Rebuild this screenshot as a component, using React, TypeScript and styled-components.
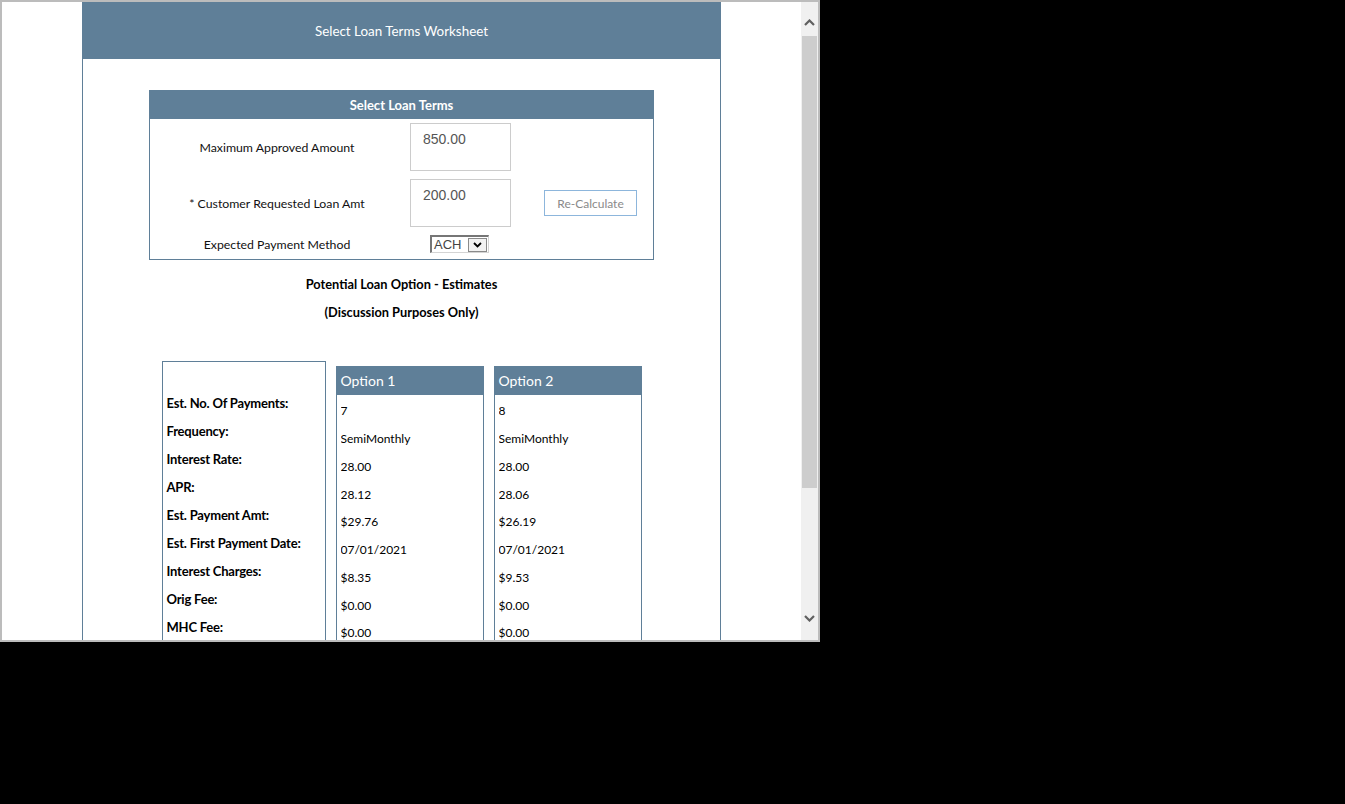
import React from "react";
import styled, { createGlobalStyle } from "styled-components";

const C = "#5f7f98";
const FONT = `Lato, "Open Sans", "Liberation Sans", sans-serif`;

const Global = createGlobalStyle`
  html, body { margin: 0; padding: 0; background: #000; }
  * { box-sizing: border-box; }
`;

const Frame = styled.div`
  width: 820px;
  height: 642px;
  border: 2px solid #bcbcbc;
  background: #fff;
  display: flex;
  overflow: hidden;
`;

const Viewport = styled.div`
  flex: 1;
  overflow: hidden;
  font-family: ${FONT};
`;

const ScrollBar = styled.div`
  width: 17px;
  background: #f0f0f0;
  display: flex;
  flex-direction: column;
  align-items: center;
`;

const ArrowBtn = styled.div<{ $pad: number }>`
  height: 34px;
  width: 100%;
  display: flex;
  align-items: flex-start;
  justify-content: center;
  padding-top: ${(p) => p.$pad}px;
`;

const Thumb = styled.div`
  width: 15px;
  height: 452px;
  background: #cdcdcd;
`;

const Spacer = styled.div`
  flex: 1;
`;

const Page = styled.div`
  width: 639px;
  margin: 0 auto;
  border-left: 1px solid ${C};
  border-right: 1px solid ${C};
  min-height: 700px;
`;

const TitleBar = styled.div`
  height: 57px;
  background: ${C};
  color: #fff;
  display: flex;
  align-items: center;
  justify-content: center;
  font-size: 13.4px;
`;

const Body = styled.div`
  padding-top: 31px;
  display: flex;
  flex-direction: column;
  align-items: center;
`;

const Panel = styled.div`
  width: 505px;
  border: 1px solid ${C};
`;

const PanelHead = styled.div`
  height: 28px;
  background: ${C};
  color: #fff;
  font-weight: 700;
  font-size: 13px;
  display: flex;
  align-items: center;
  justify-content: center;
`;

const PanelGrid = styled.div`
  display: grid;
  grid-template-columns: 254px 101px 93px;
  column-gap: 6px;
  row-gap: 8px;
  padding: 4px 0 6px;
  align-items: center;
`;

const FieldLabel = styled.div`
  text-align: center;
  font-size: 12.3px;
  color: #111;
`;

const AmountBox = styled.input`
  width: 101px;
  height: 48px;
  border: 1px solid #cccccc;
  padding: 0 0 17px 12px;
  font-family: Arial, "Liberation Sans", sans-serif;
  font-size: 14px;
  color: #555;
  background: #fff;
  outline: none;
`;

const RecalcBtn = styled.button`
  margin-left: 27px;
  width: 93px;
  height: 26px;
  border: 1px solid #8db6dc;
  background: #fff;
  color: #8a8a8a;
  font-family: ${FONT};
  font-size: 12px;
  padding: 0;
`;

const SelectBox = styled.div`
  justify-self: start;
  margin-left: 20px;
  width: 59px;
  height: 18px;
  border-style: solid;
  border-width: 2px 1px 1px 2px;
  border-color: #767676 #d4d4d4 #d4d4d4 #767676;
  display: flex;
  align-items: center;
  justify-content: space-between;
  padding-left: 2px;
  font-family: Arial, "Liberation Sans", sans-serif;
  font-size: 13px;
  color: #444;
`;

const SelectArrow = styled.span`
  width: 19px;
  height: 14px;
  border: 1px solid #8a8a8a;
  background: #f2f2f2;
  display: flex;
  align-items: center;
  justify-content: center;
  margin-right: 1px;
`;

const Heading = styled.div<{ $gap: number }>`
  margin-top: ${(p) => p.$gap}px;
  font-weight: 700;
  font-size: 12.8px;
  color: #000;
  line-height: 16px;
`;

const Options = styled.div`
  margin-top: 41px;
  display: flex;
  gap: 10px;
  align-items: flex-start;
`;

const LabelCol = styled.div`
  width: 164px;
  height: 320px;
  border: 1px solid ${C};
  padding: 27px 0 0 4px;
`;

const Row = styled.div`
  height: 28px;
  display: flex;
  align-items: center;
  white-space: nowrap;
`;

const LabelRow = styled(Row)`
  font-weight: 700;
  font-size: 13px;
  color: #000;
  letter-spacing: -0.2px;
`;

const OptionCol = styled.div`
  margin-top: 5px;
  width: 148px;
  height: 320px;
  border: 1px solid ${C};
  border-top: none;
`;

const OptionHead = styled.div`
  height: 29px;
  margin: 0 -1px;
  background: ${C};
  color: #fff;
  font-size: 14px;
  padding-left: 5px;
  display: flex;
  align-items: center;
`;

const OptionBody = styled.div`
  padding: 2px 0 0 4px;
`;

const ValueRow = styled(Row)`
  height: 27.75px;
  font-size: 12px;
  color: #000;
  overflow: hidden;
`;

const labels = [
  "Est. No. Of Payments:",
  "Frequency:",
  "Interest Rate:",
  "APR:",
  "Est. Payment Amt:",
  "Est. First Payment Date:",
  "Interest Charges:",
  "Orig Fee:",
  "MHC Fee:",
];

const options = [
  { name: "Option 1", values: ["7", "SemiMonthly", "28.00", "28.12", "$29.76", "07/01/2021", "$8.35", "$0.00", "$0.00"] },
  { name: "Option 2", values: ["8", "SemiMonthly", "28.00", "28.06", "$26.19", "07/01/2021", "$9.53", "$0.00", "$0.00"] },
];

const Chevron = ({ up }: { up?: boolean }) => (
  <svg width="11" height="7" viewBox="0 0 11 7">
    <path
      d={up ? "M1 6 L5.5 1.5 L10 6" : "M1 1 L5.5 5.5 L10 1"}
      fill="none"
      stroke="#606060"
      strokeWidth="2.2"
    />
  </svg>
);

export default function App() {
  return (
    <>
      <Global />
      <Frame>
        <Viewport>
          <Page>
            <TitleBar>Select Loan Terms Worksheet</TitleBar>
            <Body>
              <Panel>
                <PanelHead>Select Loan Terms</PanelHead>
                <PanelGrid>
                  <FieldLabel>Maximum Approved Amount</FieldLabel>
                  <AmountBox readOnly value="850.00" />
                  <span />
                  <FieldLabel>* Customer Requested Loan Amt</FieldLabel>
                  <AmountBox readOnly value="200.00" />
                  <RecalcBtn>Re-Calculate</RecalcBtn>
                  <FieldLabel>Expected Payment Method</FieldLabel>
                  <SelectBox>
                    ACH
                    <SelectArrow>
                      <svg width="9" height="6" viewBox="0 0 9 6">
                        <path d="M1 1 L4.5 4.5 L8 1" fill="none" stroke="#000" strokeWidth="1.8" />
                      </svg>
                    </SelectArrow>
                  </SelectBox>
                  <span />
                </PanelGrid>
              </Panel>
              <Heading $gap={16}>Potential Loan Option - Estimates</Heading>
              <Heading $gap={12}>(Discussion Purposes Only)</Heading>
              <Options>
                <LabelCol>
                  {labels.map((l) => (
                    <LabelRow key={l}>{l}</LabelRow>
                  ))}
                </LabelCol>
                {options.map((o) => (
                  <OptionCol key={o.name}>
                    <OptionHead>{o.name}</OptionHead>
                    <OptionBody>
                      {o.values.map((v, i) => (
                        <ValueRow key={i}>{v}</ValueRow>
                      ))}
                    </OptionBody>
                  </OptionCol>
                ))}
              </Options>
            </Body>
          </Page>
        </Viewport>
        <ScrollBar>
          <ArrowBtn $pad={17}>
            <Chevron up />
          </ArrowBtn>
          <Thumb />
          <Spacer />
          <ArrowBtn $pad={9}>
            <Chevron />
          </ArrowBtn>
        </ScrollBar>
      </Frame>
    </>
  );
}
